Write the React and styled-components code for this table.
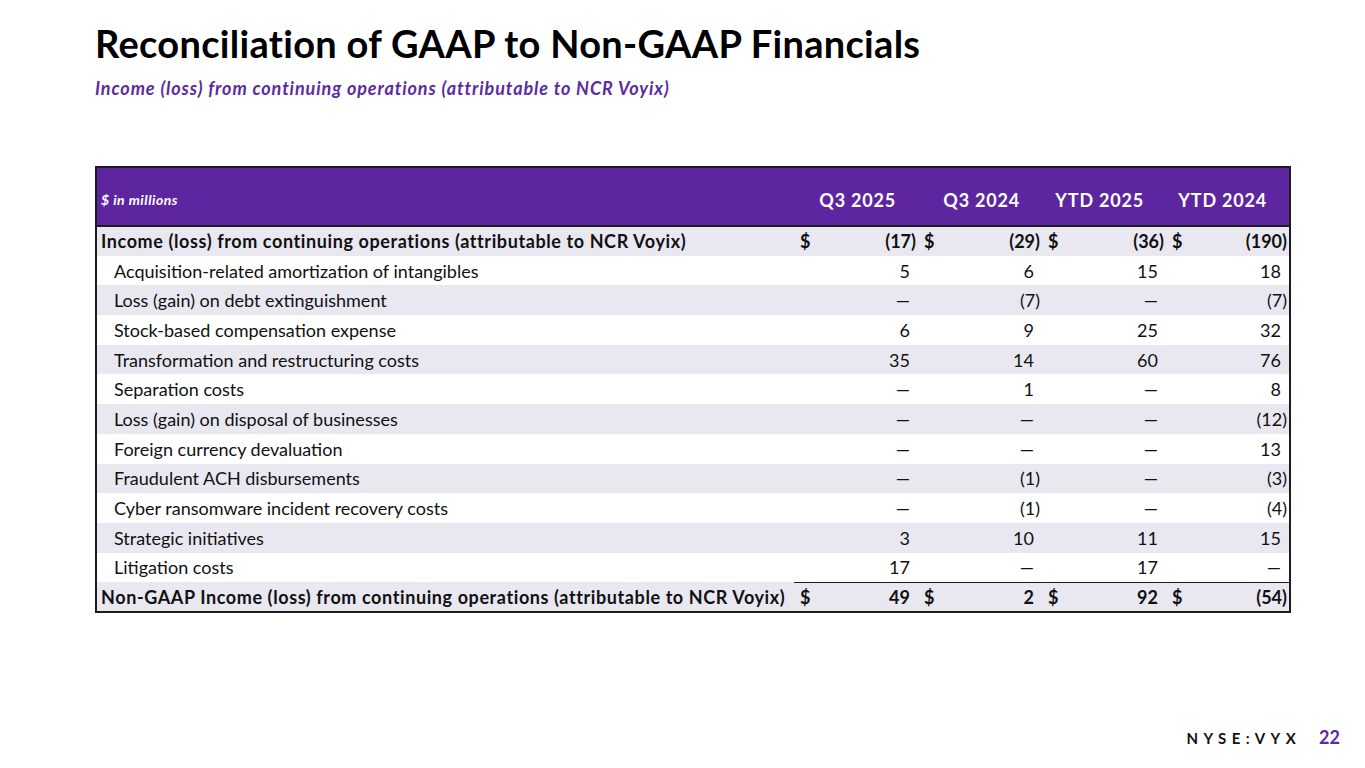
import React from 'react';
import styled, { createGlobalStyle } from 'styled-components';

const GlobalStyle = createGlobalStyle`
  html, body { margin: 0; padding: 0; background: #fff; }
  body { font-family: "Lato", "Noto Sans", sans-serif; color: #111; }
`;

const Slide = styled.div`
  width: 1365px;
  height: 768px;
  box-sizing: border-box;
  padding: 20px 76px 0 95px;
  display: flex;
  flex-direction: column;
  position: relative;
`;

const Title = styled.h1`
  margin: 0;
  font-size: 38px;
  font-weight: 700;
  line-height: 46px;
  color: #000;
  letter-spacing: 0.3px;
`;

const Subtitle = styled.h2`
  margin: 11px 0 0;
  font-size: 18px;
  font-weight: 700;
  font-style: italic;
  line-height: 22px;
  letter-spacing: 0.9px;
  color: #5b2ca0;
`;

const Table = styled.table`
  margin-top: 67px;
  width: 1194px;
  border-collapse: collapse;
  border: 2px solid #1c1c1c;
  font-size: 18px;
  table-layout: fixed;
`;

const HeadRow = styled.tr`
  background: #5e25a0;
  height: 59px;
  border-bottom: 2px solid #1c1c1c;
`;

const HeadCell = styled.th`
  color: #fff;
  font-weight: 700;
  font-size: 18px;
  letter-spacing: 0.8px;
  text-align: right;
  padding: 6px 22px 0 0;
`;

const UnitCell = styled.th`
  color: #fff;
  font-weight: 700;
  font-style: italic;
  font-size: 14px;
  letter-spacing: 0.5px;
  text-align: left;
  padding: 6px 0 0 4px;
`;

const Row = styled.tr`
  height: 29.7px;
  background: ${({ $shade }) => ($shade ? '#e9e8f1' : '#fff')};
`;

const Label = styled.td`
  padding: 0 0 0 ${({ $bold }) => ($bold ? '4px' : '17px')};
  font-weight: ${({ $bold }) => ($bold ? 700 : 400)};
  letter-spacing: ${({ $bold }) => ($bold ? '0.6px' : '0')};
  white-space: nowrap;
`;

const Dollar = styled.td`
  padding: 0 0 0 6px;
  font-weight: 700;
  ${({ $rule }) => $rule && 'border-top: 1.5px solid #1c1c1c;'}
`;

const Value = styled.td`
  text-align: right;
  padding-right: ${({ $paren }) => ($paren ? '2px' : '8px')};
  font-weight: ${({ $bold }) => ($bold ? 700 : 400)};
  ${({ $rule }) => $rule && 'border-top: 1.5px solid #1c1c1c;'}
`;

const Footer = styled.div`
  position: absolute;
  right: 25px;
  bottom: 20px;
  display: flex;
  align-items: baseline;
  gap: 18px;
`;

const Ticker = styled.span`
  font-size: 15px;
  font-weight: 700;
  letter-spacing: 5.4px;
  color: #111;
`;

const PageNum = styled.span`
  font-size: 18px;
  font-weight: 700;
  color: #5b2ca0;
`;

const D = '—';
const rows = [
  { label: 'Income (loss) from continuing operations (attributable to NCR Voyix)', bold: true, dollar: true, v: ['(17)', '(29)', '(36)', '(190)'] },
  { label: 'Acquisition-related amortization of intangibles', v: ['5', '6', '15', '18'] },
  { label: 'Loss (gain) on debt extinguishment', v: [D, '(7)', D, '(7)'] },
  { label: 'Stock-based compensation expense', v: ['6', '9', '25', '32'] },
  { label: 'Transformation and restructuring costs', v: ['35', '14', '60', '76'] },
  { label: 'Separation costs', v: [D, '1', D, '8'] },
  { label: 'Loss (gain) on disposal of businesses', v: [D, D, D, '(12)'] },
  { label: 'Foreign currency devaluation', v: [D, D, D, '13'] },
  { label: 'Fraudulent ACH disbursements', v: [D, '(1)', D, '(3)'] },
  { label: 'Cyber ransomware incident recovery costs', v: [D, '(1)', D, '(4)'] },
  { label: 'Strategic initiatives', v: ['3', '10', '11', '15'] },
  { label: 'Litigation costs', v: ['17', D, '17', D] },
  { label: 'Non-GAAP Income (loss) from continuing operations (attributable to NCR Voyix)', bold: true, dollar: true, rule: true, v: ['49', '2', '92', '(54)'] },
];

const periods = ['Q3 2025', 'Q3 2024', 'YTD 2025', 'YTD 2024'];

export default function App() {
  return (
    <>
      <GlobalStyle />
      <Slide>
        <Title>Reconciliation of GAAP to Non-GAAP Financials</Title>
        <Subtitle>Income (loss) from continuing operations (attributable to NCR Voyix)</Subtitle>
        <Table>
          <colgroup>
            <col style={{ width: 698 }} />
            {periods.map((p) => (
              <React.Fragment key={p}>
                <col style={{ width: 24 }} />
                <col style={{ width: 100 }} />
              </React.Fragment>
            ))}
          </colgroup>
          <thead>
            <HeadRow>
              <UnitCell>$ in millions</UnitCell>
              {periods.map((p) => (
                <HeadCell key={p} colSpan={2}>{p}</HeadCell>
              ))}
            </HeadRow>
          </thead>
          <tbody>
            {rows.map((r, i) => (
              <Row key={r.label} $shade={i % 2 === 0}>
                <Label $bold={r.bold}>{r.label}</Label>
                {r.v.map((val, j) => (
                  <React.Fragment key={j}>
                    <Dollar $rule={r.rule}>{r.dollar ? '$' : ''}</Dollar>
                    <Value $bold={r.bold} $rule={r.rule} $paren={val.endsWith(')')}>{val}</Value>
                  </React.Fragment>
                ))}
              </Row>
            ))}
          </tbody>
        </Table>
        <Footer>
          <Ticker>NYSE:VYX</Ticker>
          <PageNum>22</PageNum>
        </Footer>
      </Slide>
    </>
  );
}
